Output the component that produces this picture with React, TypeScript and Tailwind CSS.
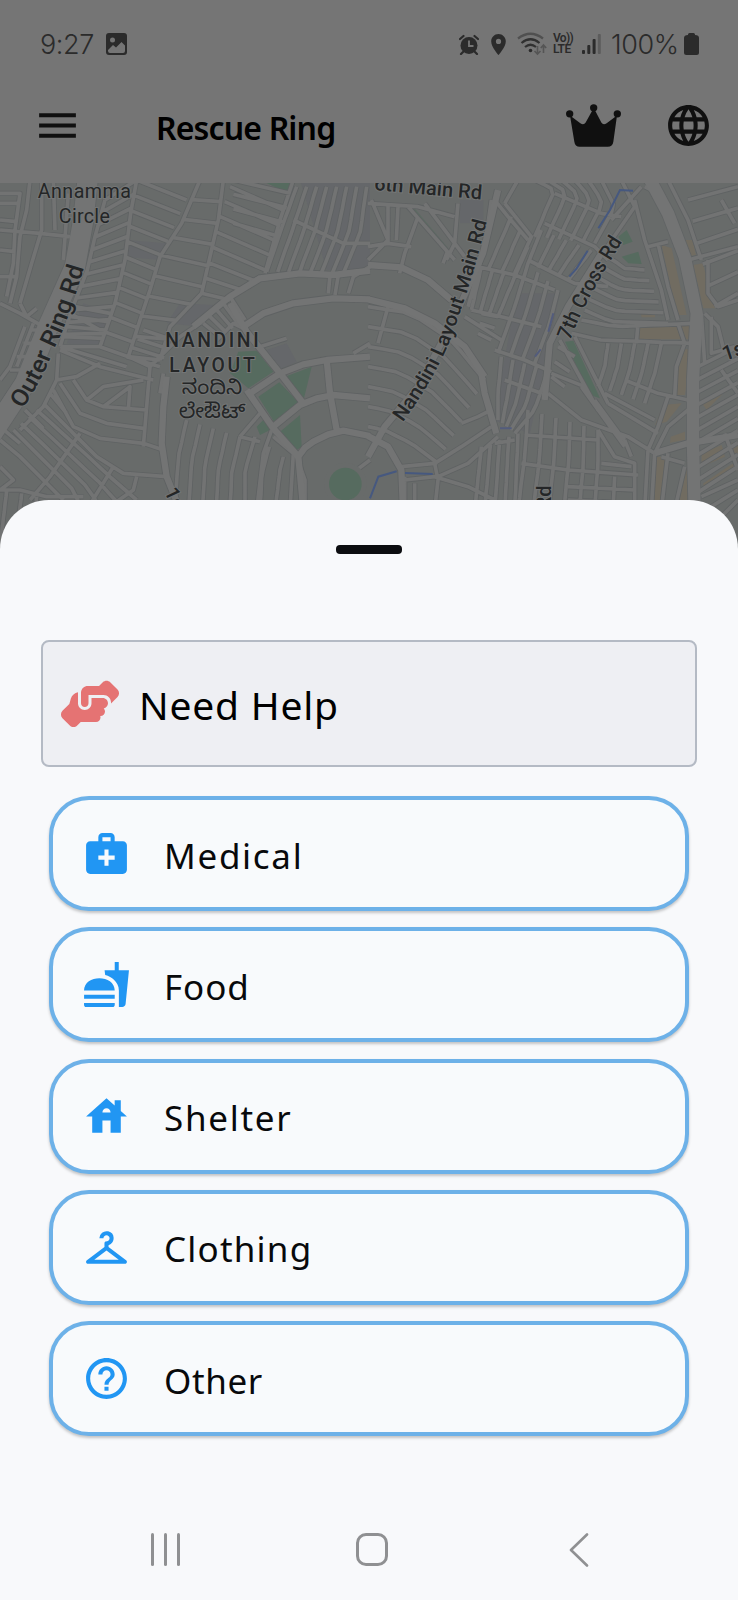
import React from "react";
import {
  MdMenu,
  MdLanguage,
  MdMedicalServices,
  MdFastfood,
  MdHouse,
  MdCheckroom,
  MdHelpOutline,
  MdLocationOn,
} from "react-icons/md";
import { FaHandshakeAngle } from "react-icons/fa6";

type Pt = [number, number];
type Line = Pt[];

const sample = (line: Line, t: number): Pt => {
  const lens = line.slice(1).map((p, i) => Math.hypot(p[0] - line[i][0], p[1] - line[i][1]));
  let d = t * lens.reduce((s, l) => s + l, 0);
  for (let i = 0; i < lens.length; i++) {
    if (d <= lens[i] || i === lens.length - 1) {
      const k = lens[i] ? Math.min(1, d / lens[i]) : 0;
      return [line[i][0] + (line[i + 1][0] - line[i][0]) * k, line[i][1] + (line[i + 1][1] - line[i][1]) * k];
    }
    d -= lens[i];
  }
  return line[0];
};

/* n cross streets joining a and b */
const rungs = (a: Line, b: Line, n: number): Line[] =>
  Array.from({ length: n }, (_, i) => [sample(a, i / (n - 1)), sample(b, i / (n - 1))]);

/* n streets that run alongside a and b, spread evenly between them */
const along = (a: Line, b: Line, n: number): Line[] =>
  Array.from({ length: n }, (_, i) => {
    const k = i / (n - 1);
    return Array.from({ length: 9 }, (_, j) => {
      const p = sample(a, j / 8);
      const q = sample(b, j / 8);
      return [p[0] + (q[0] - p[0]) * k, p[1] + (q[1] - p[1]) * k] as Pt;
    });
  });

const toPath = (lines: Line[]) =>
  lines.map((l) => "M" + l.map((p) => p[0].toFixed(0) + " " + p[1].toFixed(0)).join("L")).join("");

const edge: Line = [[315, 60], [285, 170], [262, 270], [215, 390], [180, 500]];
const v1: Line = [[410, 0], [392, 100], [375, 240], [345, 370], [300, 500]];
const v2: Line = [[600, 0], [545, 130], [480, 230], [450, 330], [420, 420], [385, 530]];
const v3: Line = [[670, 0], [655, 120], [630, 230], [605, 340], [510, 440], [480, 540]];
const v4: Line = [[880, 0], [840, 120], [795, 280]];
const mid: Line = [[385, 530], [450, 560], [540, 470], [600, 430], [690, 350], [780, 290]];

const westMinor: Line[] = [
  edge, v1, v2, v3, v4, mid,
  ...rungs([[315, 60], [285, 170], [262, 270], [215, 390], [180, 500]], v1, 13),
  ...rungs(v1, [[560, 60], [500, 190], [450, 330], [420, 420], [385, 530]], 12),
  ...rungs(v2, v3, 10),
  ...rungs([[690, 20], [655, 120], [630, 230], [605, 340]], [[850, 90], [830, 160], [795, 280], [690, 360]], 8),
  ...along([[890, 20], [850, 130], [800, 275]], [[1100, 20], [1080, 160], [1030, 280]], 8),
  ...rungs([[700, 0], [700, 130]], [[870, 40], [840, 170]], 4),
  [[880, 120], [1030, 190], [1110, 190]],
  [[0, 40], [60, 40], [45, 150], [40, 250], [20, 350]],
  [[90, 0], [80, 90], [60, 170], [50, 290], [30, 370]],
  [[125, 0], [125, 150], [95, 250], [60, 370]],
  [[160, 0], [165, 150]], [[205, 40], [190, 240]],
  [[0, 150], [120, 160], [210, 170]],
  [[0, 70], [60, 70]], [[0, 120], [50, 125]], [[0, 210], [45, 215]], [[0, 290], [50, 290]],
  [[0, 370], [60, 400], [130, 440]], [[60, 370], [80, 410], [110, 385]],
  [[130, 440], [60, 590], [0, 680]], [[75, 440], [30, 560], [0, 600]], [[100, 430], [50, 560]],
  ...rungs([[90, 450], [30, 570]], [[130, 450], [70, 570]], 4),
  [[210, 400], [300, 450]],
  ...rungs([[225, 380], [180, 500]], [[330, 400], [300, 500]], 5),
  [[180, 510], [300, 560], [460, 600]], [[180, 500], [380, 560]],
  [[175, 520], [170, 600], [130, 680], [60, 750]],
  [[170, 600], [230, 590], [300, 550]],
  [[220, 600], [260, 660], [310, 680], [440, 690]], [[260, 660], [310, 620], [430, 600]],
  [[310, 680], [390, 620], [385, 690]],
  [[180, 610], [240, 700], [320, 730], [430, 745]],
  [[160, 630], [220, 740], [300, 775], [430, 790], [490, 810]],
  [[130, 670], [220, 760], [290, 830], [370, 880], [500, 890]],
  ...along([[40, 750], [110, 820], [220, 930], [250, 1000]], [[110, 690], [210, 780], [330, 890], [410, 960]], 4),
  ...rungs([[60, 790], [200, 700]], [[0, 740], [150, 640]], 3),
  [[240, 760], [150, 890], [90, 960]], [[340, 860], [260, 990]], [[410, 890], [400, 930], [300, 1000]],
  [[0, 780], [60, 830], [190, 960]], [[0, 860], [40, 900], [0, 930]], [[0, 930], [60, 930], [140, 950], [250, 950]],
  ...along([[20, 930], [0, 1100]], [[110, 950], [90, 1100]], 3),
  [[450, 560], [440, 680], [430, 800]], [[490, 580], [480, 640]],
  ...rungs([[430, 450], [380, 530]], [[520, 480], [480, 560]], 4),
  ...rungs([[610, 430], [690, 350]], [[660, 470], [735, 420]], 5),
  [[650, 480], [700, 430], [740, 450]],
  ...along([[560, 720], [535, 830], [525, 990]], [[720, 770], [695, 880], [690, 990]], 5),
  ...along([[765, 770], [735, 870], [735, 990]], [[850, 830], [840, 870], [825, 990]], 3),
  [[720, 770], [780, 700]], [[720, 770], [780, 785]], [[815, 750], [790, 820], [770, 990]],
  [[820, 770], [880, 820], [870, 990]], [[890, 830], [915, 900], [915, 990]],
  [[690, 370], [740, 450]],
  [[1110, 840], [1070, 870]],
  [[780, 500], [860, 475]],
  [[1060, 520], [1110, 490]],
  [[990, 285], [985, 340]], [[1015, 285], [1005, 345]], [[1045, 340], [1060, 290], [1110, 260]],
];

const westWide: Line[] = [
  [[580, 440], [690, 350], [780, 295], [900, 280], [1000, 285], [1110, 272]],
  [[730, 440], [790, 400], [880, 370], [1000, 355], [1110, 358]],
  [[690, 370], [740, 455], [840, 580], [910, 670]],
  [[750, 640], [840, 580], [910, 553], [980, 540], [1110, 530]],
  [[820, 740], [900, 675], [950, 655], [1000, 645], [1110, 655]],
  [[740, 630], [820, 745], [895, 830], [910, 990]],
  [[895, 830], [915, 803], [940, 785], [985, 763], [1030, 752], [1110, 768]],
  [[980, 540], [990, 640], [1010, 750]],
  [[500, 590], [490, 680], [485, 790], [500, 890], [540, 990]],
];

const eastMinor: Line[] = [
  ...along([[0, 380], [130, 400], [250, 480], [350, 600]], [[0, 740], [50, 750], [130, 790], [210, 850]], 7),
  [[0, 70], [150, 80], [260, 110]], [[10, 60], [60, 180], [0, 240]], [[60, 70], [60, 190]], [[90, 80], [85, 180]],
  [[150, 110], [110, 220], [95, 280]], [[120, 80], [260, 240]], [[170, 70], [290, 230]],
  [[240, 210], [225, 250]], [[0, 200], [60, 190], [130, 200]],
  [[270, 70], [260, 190], [235, 240]], [[370, 60], [350, 200], [300, 380]],
  [[380, 60], [420, 110], [480, 180]], [[60, 380], [30, 490]],
  [[410, 70], [450, 0]], [[410, 70], [490, 170], [440, 280]],
  ...along([[430, 110], [360, 270]], [[480, 200], [440, 290]], 3),
  ...along([[500, 0], [560, 30], [500, 170]], [[700, 0], [740, 80], [680, 190]], 6),
  [[560, 40], [700, 100], [760, 110]], [[530, 130], [680, 200], [720, 240]],
  ...along([[520, 150], [480, 250]], [[670, 210], [600, 300]], 5),
  [[480, 240], [620, 310], [720, 320]], [[330, 260], [440, 285], [560, 330]],
  ...along([[340, 260], [310, 390]], [[440, 290], [390, 410]], 4),
  ...along([[480, 250], [440, 380], [390, 520]], [[570, 330], [545, 430], [500, 550]], 4),
  [[310, 390], [400, 410], [520, 440]], [[290, 410], [400, 480]],
  ...rungs([[340, 400], [330, 460]], [[390, 410], [370, 480]], 3),
  ...along([[400, 530], [390, 640], [390, 720]], [[540, 570], [500, 690], [440, 760]], 5),
  [[380, 510], [470, 540], [550, 575]], [[410, 600], [520, 640]],
  [[760, 0], [800, 80], [690, 240]], [[820, 20], [730, 120]],
  [[800, 60], [830, 180], [880, 330], [900, 420]],
  ...along([[720, 230], [770, 265], [830, 270]], [[650, 390], [730, 425], [900, 430]], 6),
  [[870, 40], [830, 20]], [[840, 200], [900, 185]], [[870, 190], [900, 320], [930, 420]],
  ...along([[610, 460], [700, 480], [970, 490]], [[640, 420], [740, 440], [970, 430]], 2),
  [[810, 430], [805, 490]],
  [[575, 480], [690, 690], [770, 780]], [[620, 470], [720, 670]],
  ...along([[720, 490], [710, 560], [690, 620]], [[880, 490], [860, 580], [830, 670]], 5),
  [[770, 600], [870, 640], [960, 660]], [[710, 640], [860, 720]], [[720, 670], [870, 760]],
  [[550, 580], [650, 620], [690, 690]], [[540, 640], [640, 720], [780, 770], [860, 820]],
  ...rungs([[570, 500], [550, 590]], [[620, 530], [590, 620]], 3),
  [[640, 620], [770, 800]], [[680, 660], [760, 770]],
  [[900, 650], [870, 740], [840, 810]], [[930, 430], [950, 490], [925, 560], [920, 650]], [[960, 690], [900, 740], [860, 820]],
  ...along([[480, 690], [470, 830], [450, 990]], [[690, 750], [690, 850], [680, 990]], 6),
  [[470, 765], [690, 780]], [[460, 850], [600, 870], [810, 885]], [[600, 920], [800, 930]], [[600, 960], [800, 970]],
  [[690, 750], [740, 830], [800, 850], [800, 990]], [[700, 850], [790, 860]], [[740, 890], [735, 990]],
  [[770, 780], [790, 830]], [[840, 810], [830, 990]], [[900, 820], [880, 990]], [[950, 860], [920, 990]],
  [[880, 830], [950, 850]], [[860, 820], [850, 990]],
  [[370, 740], [280, 800], [200, 850], [100, 860]], [[390, 770], [300, 850], [210, 890]],
  [[110, 900], [200, 890], [300, 920], [380, 960]], [[200, 850], [210, 900], [200, 990]],
  [[280, 730], [330, 710], [370, 690]],
  ...along([[340, 800], [320, 990]], [[450, 760], [440, 990]], 5),
  [[380, 790], [440, 780]], [[110, 890], [110, 990]], [[140, 910], [140, 990]],
  ...rungs([[960, 60], [1000, 240], [1040, 380]], [[1110, 20], [1110, 190], [1110, 340]], 6),
  [[900, 0], [960, 120], [1000, 240]], [[1060, 60], [1100, 130]],
  [[960, 240], [1110, 200]], [[1020, 240], [1020, 340], [1050, 380], [1110, 360]],
  [[1010, 400], [1050, 440], [1070, 520]], [[1000, 400], [1010, 550]], [[1030, 410], [1030, 520], [1100, 500]],
  ...rungs([[990, 560], [985, 940]], [[1110, 500], [1110, 860]], 11),
  ...rungs([[1000, 950], [1060, 1010]], [[1110, 900], [1110, 960]], 3),
  [[1060, 570], [1110, 640]], [[1070, 760], [1110, 870]],
];

const eastWide: Line[] = [
  [[0, 255], [100, 262], [180, 300], [250, 360]],
  [[0, 358], [110, 385], [200, 430], [290, 500], [350, 590]],
  [[390, 30], [345, 220], [270, 390]],
  [[340, 580], [350, 640], [385, 760]],
  [[225, 480], [150, 620], [50, 740], [0, 830]],
  [[700, 220], [600, 380], [545, 490], [530, 660]],
  [[0, 768], [60, 800], [100, 870], [105, 990]],
  [[860, 820], [960, 790], [1110, 765]],
];

const shift = (l: Line[]): Line[] => l.map((a) => a.map((p) => [p[0] + 1104, p[1]] as Pt));
const minorRoads = toPath([...westMinor, ...shift(eastMinor)]);
const wideRoads = toPath([...westWide, ...shift(eastWide)]);
const ringRoad = "M265 -20L250 120L225 260L140 450L75 610L-30 770";
const eastRoad = "M1940 -20L2004 100L2054 230L2090 400L2079 600L2079 800L2084 990";

function CityMap() {
  return (
    <svg className="block h-[367px] w-[738px] shrink-0" viewBox="0 9 2214 1101" preserveAspectRatio="none" aria-hidden="true">
      <defs>
        <path id="ring" d="M68 688Q132 590 163 505Q205 425 254 255" />
        <path id="nandini" d="M1208 728Q1330 560 1372 420Q1420 290 1464 110" />
        <path id="cross" d="M1710 482Q1755 360 1870 180" />
      </defs>
      <rect width="2214" height="1120" fill="#686b6a" />
      <g fill="#65676a">
        <path d="M380 180L500 190L480 240L370 230ZM540 370L640 375L600 440L500 430ZM800 510L860 490L890 545L830 575ZM900 0H1110V270H980ZM250 370L340 400L310 500L200 490Z" />
        <path d="M1550 340L1680 340L1590 760L1480 720ZM1380 60H1450V130H1380Z" />
      </g>
      <g fill="#566b5f">
        <path d="M715 515L770 512L820 575L745 625L690 580ZM775 650L838 607L898 670L825 730ZM855 590L935 560L912 655ZM840 755L900 705L905 800L890 810ZM770 740L795 715L810 750L780 765ZM800 9H875L860 38Z" />
        <path d="M1855 170L1880 150L1898 185L1870 195ZM1865 230L1915 215L1925 252L1885 250ZM1695 485L1720 482L1800 655L1770 645Z" />
        <path d="M1240 80L1345 205L1330 210L1230 90Z" opacity=".6" />
      </g>
      <g fill="#716c61">
        <path d="M1985 195L2015 205L2060 405L2030 405ZM2055 180L2078 180L2088 225L2070 228ZM2080 255L2108 250L2135 345L2145 385L2110 385ZM1920 438L2072 434L2072 478L1915 478ZM2038 508L2072 508L2055 645L2022 645ZM1990 675L2045 670L2000 725L1965 735ZM2012 770L2055 755L2055 780L2010 788ZM1970 830L2010 830L1980 990L1960 990ZM2055 865L2070 865L2060 990L2030 990ZM2105 820L2165 795L2175 830L2105 860ZM2110 910L2214 840V870L2110 925ZM2100 660L2170 640L2120 690ZM1920 392L1965 392L1965 412L1925 412ZM2190 790L2214 785V820L2195 825Z" />
      </g>
      <g fill="none" strokeLinejoin="round">
        <path d={minorRoads} stroke="#5f6263" strokeWidth="16" />
        <path d={wideRoads} stroke="#5f6263" strokeWidth="24" />
        <path d={ringRoad} stroke="#616465" strokeWidth="66" />
        <path d={eastRoad} stroke="#616465" strokeWidth="42" />
        <path d={minorRoads} stroke="#727373" strokeWidth="11" />
        <g stroke="#737474">
          <path d={wideRoads} strokeWidth="19" />
          <path d={ringRoad} strokeWidth="61" />
          <path d={eastRoad} strokeWidth="37" />
        </g>
      </g>
      <circle cx="1036" cy="912" r="64" fill="#686b6a" />
      <circle cx="1036" cy="912" r="49" fill="#566b5f" />
      <g fill="none" stroke="#46587f" strokeWidth="6">
        <path d="M1899 32L1860 30L1830 90L1795 145M1763 212L1730 265L1708 290M1110 955L1135 890L1190 874M1215 879L1298 882" />
        <path d="M1660 400L1645 455M1605 530L1622 508M1500 745L1535 745" stroke="#535c7c" />
      </g>
      <g
        fill="#242627"
        stroke="#747676"
        strokeWidth="6"
        paintOrder="stroke"
        fontFamily="Roboto, sans-serif"
        fontWeight="500"
      >
        <g fontSize="59" fontWeight="400" textAnchor="middle">
          <text x="253" y="55" textLength="280">Annamma</text>
          <text x="253" y="129" textLength="153">Circle</text>
        </g>
        <text fontSize="72">
          <textPath href="#ring" textLength="466" lengthAdjust="spacingAndGlyphs">Outer Ring Rd</textPath>
        </text>
        <g fontSize="58" textAnchor="middle">
          <text x="636" y="500" textLength="280">NANDINI</text>
          <text x="636" y="575" textLength="256">LAYOUT</text>
        </g>
        <g fontSize="62" fontWeight="400" fontFamily="'Noto Sans Kannada', 'Noto Sans', sans-serif" textAnchor="middle">
          <text x="636" y="641" textLength="182" lengthAdjust="spacingAndGlyphs">ನಂದಿನಿ</text>
          <text x="636" y="713" textLength="200" lengthAdjust="spacingAndGlyphs">ಲೇಔಟ್</text>
        </g>
        <text fontSize="60" transform="translate(1121 30) rotate(5)" textLength="325" lengthAdjust="spacingAndGlyphs">6th Main Rd</text>
        <text fontSize="60">
          <textPath href="#nandini" textLength="660" lengthAdjust="spacingAndGlyphs">Nandini Layout Main Rd</textPath>
        </text>
        <text fontSize="62">
          <textPath href="#cross" textLength="338" lengthAdjust="spacingAndGlyphs">7th Cross Rd</textPath>
        </text>
        <text fontSize="62" transform="translate(2174 543) rotate(-18)">1st</text>
        <text fontSize="60" transform="translate(1653 988) rotate(-90)">Rd</text>
        <text fontSize="60" transform="translate(492 934) rotate(65)">1st</text>
      </g>
    </svg>
  );
}

function StatusBar() {
  return (
    <div className="flex h-[88px] items-center pl-[40px] pr-[39px] text-[#2b2b2b]">
      <span className="w-[53px] whitespace-nowrap font-['Inter',sans-serif] text-[27px] font-light leading-none tracking-[-0.4px]">9:27</span>
      <svg className="ml-[13px] h-[22px] w-[21px]" viewBox="0 0 21 22">
        <rect width="21" height="22" rx="3" fill="#2b2b2b" />
        <circle cx="6.500" cy="7" r="2.500" fill="#757575" />
        <path d="M2 17L7 12L10 14.500L15.500 9L19 12.500V18Q19 20 17 20H4Q2 20 2 18Z" fill="#757575" />
      </svg>
      <div className="ml-auto flex items-center">
        <svg className="h-[21px] w-5" viewBox="0 0 20 21">
          <circle cx="10" cy="11.500" r="8.500" fill="#2b2b2b" />
          <path d="M1 5L4.500 2M19 5L15.500 2M4 18L2 20M16 18L18 20" stroke="#2b2b2b" strokeWidth="2.200" strokeLinecap="round" />
          <path d="M10 6.500V12H14.500" fill="none" stroke="#757575" strokeWidth="1.800" />
        </svg>
        <MdLocationOn className="ml-[7px] h-[25px] w-[25px]" />
        <svg className="ml-[6px] h-6 w-[30px]" viewBox="0 0 30 24" fill="none" strokeWidth="2.200">
          <path d="M1 6.500Q13.500 -3 26 6.500" stroke="#505050" />
          <path d="M4.500 11Q13.500 3.500 22.500 11M8 15Q13.500 10.500 19 15" stroke="#303030" />
          <circle cx="13.500" cy="18.500" r="1.800" fill="#2b2b2b" />
          <path d="M20.500 14V22M17.500 19L20.500 22L23.500 19M26.500 21V13M23.800 16L26.500 13L29.200 16" stroke="#555" strokeWidth="1.600" />
        </svg>
        <div className="ml-[6px] flex w-[21px] flex-col font-['Roboto',sans-serif] text-[12px] font-semibold leading-[11px]">
          <span className="whitespace-nowrap tracking-[-0.7px]">Vo))</span>
          <span className="tracking-[-0.5px]">LTE</span>
        </div>
        <svg className="ml-[8px] h-[20px] w-[19px]" viewBox="0 0 19 20" fill="#2b2b2b">
          <rect y="16" width="3" height="4" rx="1" />
          <rect x="5.300" y="11" width="3" height="9" rx="1" />
          <rect x="10.600" y="5" width="3" height="15" rx="1" />
          <rect x="15.800" width="3" height="20" rx="1" fill="#5c5c5c" />
        </svg>
        <span className="ml-[10px] w-[70px] whitespace-nowrap font-['Inter',sans-serif] text-[27px] font-light leading-none tracking-[-0.4px]">100%</span>
        <svg className="ml-[3px] h-[22px] w-[15px]" viewBox="0 0 15 22" fill="#2b2b2b">
          <path d="M4 2V1.500Q4 0 5.500 0H9.500Q11 0 11 1.500V2Q15 2 15 5V19.500Q15 22 12.500 22H2.500Q0 22 0 19.500V5Q0 2 4 2Z" />
        </svg>
      </div>
    </div>
  );
}

function AppBar() {
  return (
    <div className="flex h-[75px] items-center justify-between pl-[33px] pr-[25px] text-[#101010]">
      <div className="flex items-center">
        <MdMenu className="h-[49px] w-[49px]" />
        <h1 className="ml-[74px] mt-[4px] whitespace-nowrap font-['Noto_Sans',sans-serif] text-[32px] font-semibold leading-none tracking-[-0.85px] text-black">
          Rescue Ring
        </h1>
      </div>
      <div className="flex items-center gap-[43px]">
        <svg className="h-[43px] w-[55px]" viewBox="0 0 165 128" fill="#101010">
          <circle cx="11" cy="29" r="11" />
          <circle cx="83" cy="11" r="11" />
          <circle cx="154" cy="29" r="11" />
          <path d="M12 34L43 57Q53 64 59 55L76 24Q83 8 90 24L106 55Q112 64 122 57L153 34L142 113Q140 128 125 128H41Q27 128 25 113Z" />
        </svg>
        <MdLanguage className="h-[49px] w-[49px]" />
      </div>
    </div>
  );
}

const options = [
  { label: "Medical", Icon: MdMedicalServices, tracking: "tracking-[1.7px]" },
  { label: "Food", Icon: MdFastfood, tracking: "tracking-[0.9px]" },
  { label: "Shelter", Icon: MdHouse, tracking: "tracking-[1.7px]" },
  { label: "Clothing", Icon: MdCheckroom, tracking: "tracking-[1.2px]" },
  { label: "Other", Icon: MdHelpOutline, tracking: "tracking-[0.6px]" },
];

function NavBar() {
  return (
    <div className="mt-auto flex h-[101px] items-center justify-between pl-[151px] pr-[149px]">
      <div className="flex h-[33px] gap-[10px]">
        <i className="w-[3px] rounded-full bg-[#8f9092]" />
        <i className="w-[3px] rounded-full bg-[#8f9092]" />
        <i className="w-[3px] rounded-full bg-[#8f9092]" />
      </div>
      <div className="ml-[-5px] h-[33px] w-8 rounded-[10px] border-3 border-[#8f9092]" />
      <svg className="h-[34px] w-5" viewBox="0 0 20 34" fill="none" stroke="#8f9092" strokeWidth="2.600" strokeLinecap="round" strokeLinejoin="round">
        <path d="M18 1.500L2 17L18 32.500" />
      </svg>
    </div>
  );
}

export default function App() {
  return (
    <div className="flex h-[1600px] w-[738px] flex-col overflow-hidden bg-[#757575]">
      <StatusBar />
      <AppBar />
      <div className="mt-[20px] flex flex-col">
        <CityMap />
      </div>
      <section className="relative mt-[-50px] flex h-[1100px] shrink-0 flex-col rounded-t-[49px] bg-[#f8f9fb]">
        <div className="mx-auto mt-[45px] h-[9px] w-[66px] rounded-[4px] bg-[#0c0d10]" />
        <div className="mx-[41px] mt-[86px] flex h-[127px] shrink-0 items-center rounded-lg border-2 border-[#b4bac4] bg-[#eeeff3] pl-[17px]">
          <FaHandshakeAngle className="h-12 w-[60px] text-[#e57373]" />
          <h2 className="ml-[19px] mt-[2px] whitespace-nowrap font-['Noto_Sans',sans-serif] text-[39px] leading-none tracking-[0.8px] text-black">
            Need Help
          </h2>
        </div>
        <div className="mx-[49px] mt-[29px] flex flex-col gap-[16.3px]">
          {options.map(({ label, Icon, tracking }) => (
            <button
              key={label}
              className="flex h-[115px] shrink-0 items-center rounded-[40px] border-4 border-[#6db1e8] bg-[#f8fafc] pl-[29px] text-left shadow-[0_2px_3px_rgba(0,0,0,0.22)]"
            >
              <Icon className="h-[49px] w-[49px] text-[#2196f3]" />
              <span className={"ml-[33px] mt-[3px] whitespace-nowrap font-['Noto_Sans',sans-serif] text-[35px] leading-none text-[#08090b] " + tracking}>
                {label}
              </span>
            </button>
          ))}
        </div>
        <NavBar />
      </section>
    </div>
  );
}
